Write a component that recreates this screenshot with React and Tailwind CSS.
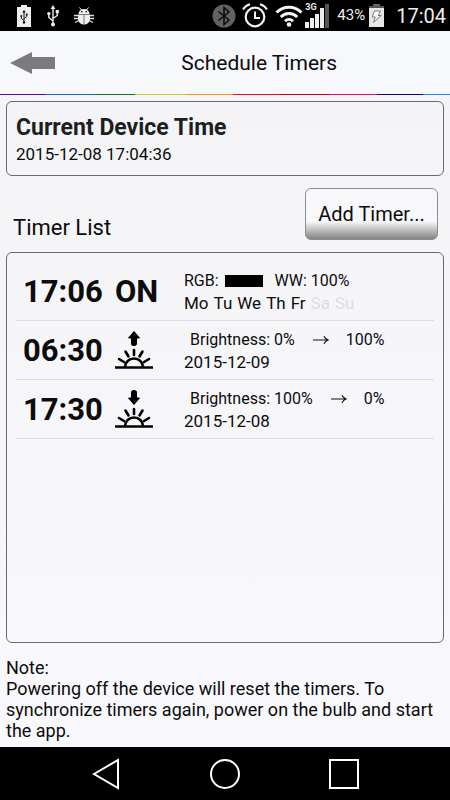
import React from 'react';

const timers = [
    { time: '17:06', kind: 'on', color: '#000000', ww: '100%', days: ['Mo', 'Tu', 'We', 'Th', 'Fr'] },
    { time: '06:30', kind: 'sunrise', from: '0%', to: '100%', date: '2015-12-09' },
    { time: '17:30', kind: 'sunset', from: '100%', to: '0%', date: '2015-12-08' }
];

const allDays = ['Mo', 'Tu', 'We', 'Th', 'Fr', 'Sa', 'Su'];

function UsbGlyph({ className }) {
    return (<svg viewBox="0 0 12 22" className={className} fill="none" stroke="currentColor" strokeWidth="1.4">
      <path d="M6 3v15M6 16L1.8 12.5V9M6 13.5l4.2-3V7"/>
      <path d="M6 0l2.4 4H3.6z" fill="currentColor" stroke="none"/>
      <circle cx="6" cy="19.5" r="2" fill="currentColor" stroke="none"/>
      <circle cx="1.8" cy="8.6" r="1.7" fill="currentColor" stroke="none"/>
      <rect x="8.7" y="5" width="3.2" height="3.2" fill="currentColor" stroke="none"/>
    </svg>);
}

function BatteryUsbIcon() {
    return (<svg viewBox="0 0 14 22" className="h-[22px] w-3.5">
      <path d="M4 0h6v2h4v20H0V2h4z" fill="#eee"/>
      <path d="M7 6v11M7 15.5l-2.7-2V11M7 13.5l2.7-1.8V9.5" fill="none" stroke="#111" strokeWidth="1"/>
      <path d="M7 4.8l1.6 2.6H5.4z" fill="#111"/>
      <circle cx="7" cy="17.5" r="1.2" fill="#111"/>
      <circle cx="4.3" cy="11" r="1" fill="#111"/>
      <rect x="8.8" y="8.6" width="1.8" height="1.8" fill="#111"/>
    </svg>);
}

function BugIcon() {
    return (<svg viewBox="0 0 20 18" className="h-[18px] w-5">
      <path d="M5.5 0.5l2 2.5M14.5 0.5l-2 2.5" stroke="#eee" strokeWidth="1"/>
      <path d="M4.5 7a5.5 5 0 0 1 11 0z" fill="#eee"/>
      <path d="M4 7.6h12V12a6 5.5 0 0 1-12 0z" fill="#eee"/>
      <path d="M0 8.5h4M0 11.5h4M1 15.5l4-2M20 8.5h-4M20 11.5h-4M19 15.5l-4-2" stroke="#ddd" strokeWidth="1.3"/>
      <circle cx="7.8" cy="4.8" r=".8" fill="#000"/>
      <circle cx="12.2" cy="4.8" r=".8" fill="#000"/>
      <path d="M10 8v9.5" stroke="#777" strokeWidth="1"/>
    </svg>);
}

function BluetoothIcon() {
    return (<svg viewBox="0 0 24 24" className="size-6">
      <circle cx="12" cy="12" r="11.5" fill="#626262"/>
      <path d="M6.5 7.500L17 16l-5 4.500v-17L17 8 6.500 16.500" fill="none" stroke="#0a0a0a" strokeWidth="1.5"/>
    </svg>);
}

function AlarmIcon() {
    return (<svg viewBox="0 0 26 25" className="h-[25px] w-[26px]" fill="none" stroke="#f2f2f2">
      <circle cx="13" cy="14" r="9.3" strokeWidth="2.2"/>
      <path d="M13 8.5V15h5" strokeWidth="2"/>
      <path d="M1 6.5Q3.5 2.5 8 1.3M25 6.5Q22.500 2.500 18 1.300" strokeWidth="2"/>
    </svg>);
}

function WifiIcon() {
    return (<svg viewBox="0 0 28 22" className="h-[22px] w-7" fill="none" stroke="#f4f4f4" strokeWidth="3">
      <path d="M1.5 7.5a17.5 17.500 0 0 1 25 0M5.800 12a11.500 11.500 0 0 1 16.400 0M10 16.200a5.700 5.700 0 0 1 8 0"/>
      <circle cx="14" cy="19.5" r="2.3" fill="#f4f4f4" stroke="none"/>
    </svg>);
}

function SignalIcon() {
    return (<div className="relative">
      <svg viewBox="0 0 24 25" className="h-[25px] w-6" fill="#eee">
        <path d="M0 19h4v6H0zM5 15h4v10H5zM10 11h4v14h-4zM15 5h4v20h-4z"/>
        <path d="M20 1h4v24h-4z" fill="#555"/>
      </svg>
      <span className="absolute top-0 left-0 text-[9px] leading-[9px] font-bold text-[#eee]">3G</span>
    </div>);
}

function BatteryIcon() {
    return (<svg viewBox="0 0 15 23" className="h-[23px] w-[15px]">
      <path d="M4 0h7v2H4z" fill="#666"/>
      <path d="M0 2h15v2H0z" fill="#555"/>
      <path d="M0 4h15v19H0z" fill="#e6e6e6"/>
      <path d="M5.5 7h6l-2.2 4.5h3L4.5 18.5l1.8-5.5H3.2z" fill="#fff" stroke="#777" strokeWidth="1"/>
    </svg>);
}

function StatusBar() {
    return (<div className="flex h-[31px] items-center justify-between bg-black pr-1 pl-[17px] text-white">
      <div className="flex items-center">
        <BatteryUsbIcon />
        <UsbGlyph className="ml-4 h-[22px] w-3 text-[#eee]"/>
        <div className="ml-[15px]"><BugIcon /></div>
      </div>
      <div className="flex items-center">
        <BluetoothIcon />
        <div className="ml-1.5"><AlarmIcon /></div>
        <div className="ml-[7px]"><WifiIcon /></div>
        <div className="ml-0.5"><SignalIcon /></div>
        <span className="ml-2 text-[15px] text-[#eee]">43%</span>
        <div className="mr-3 ml-1"><BatteryIcon /></div>
        <span className="text-xl text-[#eee]">17:04</span>
      </div>
    </div>);
}

function RainbowLine() {
    return (<div className="flex h-px">
      <div className="grow-46 bg-[#5b0a91]"/>
      <div className="grow-49 bg-[#0f73b5]"/>
      <div className="grow-40 bg-[#0b7a1c]"/>
      <div className="grow-51 bg-[#c9cf10]"/>
      <div className="grow-47 bg-[#f39a0b]"/>
      <div className="grow-46 bg-[#f01010]"/>
      <div className="grow-51 bg-[#b50d12]"/>
      <div className="grow-47 bg-[#e2106e]"/>
      <div className="grow-46 bg-[#120a6e]"/>
      <div className="grow-27 bg-[#1493dc]"/>
    </div>);
}

function Header() {
    return (<header>
      <div className="flex h-[63px] items-center justify-between pt-px pr-[113px] pl-2.5">
        <button type="button" aria-label="Back">
          <svg viewBox="0 0 45 22" className="h-[22px] w-[45px]">
            <path d="M0 11L22 0v5h23v12H22v5z" fill="#7b7b7b"/>
          </svg>
        </button>
        <h1 className="text-[21px] leading-8">Schedule Timers</h1>
      </div>
      <RainbowLine />
    </header>);
}

function SunIcon({ rising }) {
    return (<svg viewBox="0 0 38 38" className="mb-0.5 h-[38px] w-[38px]" fill="none" stroke="#000" strokeWidth="2.5">
      {rising
        ? <path d="M19 .5l5.500 6.500h-3v6a2.500 1.500 0 0 1-5 0V7h-3z" fill="#000" stroke="#000" strokeWidth="1" strokeLinejoin="round"/>
        : <path d="M19 14.500l5.500-6.500h-3V2a2.500 1.500 0 0 0-5 0v6h-3z" fill="#000" stroke="#000" strokeWidth="1" strokeLinejoin="round"/>}
      <path d="M10 36a9 8.500 0 0 1 18 0"/>
      <path d="M0 36.500h38" strokeWidth="2.600"/>
      <path d="M19 19v5M10.500 20.500l3 5M27.500 20.500l-3 5M4 28l5 3M34 28l-5 3" strokeWidth="2.600" strokeLinecap="round"/>
    </svg>);
}

function Arrow() {
    return (<svg viewBox="0 0 16 10" className="h-2.5 w-4" fill="none" stroke="#111" strokeWidth="1.2">
      <path d="M0 5h15M11 1.2Q12.5 4 15 5 12.5 6 11 8.8"/>
    </svg>);
}

function TimerRow({ timer }) {
    return (<li className="flex h-[59px] items-center border-b border-[#dedee2] pt-0.5 pl-[7px]">
      <span className="w-[92px] pt-px text-[31px] font-bold">{timer.time}</span>
      <div className="w-[69px]">
        {timer.kind === 'on'
          ? <span className="text-[31px] font-bold">ON</span>
          : <SunIcon rising={timer.kind === 'sunrise'}/>}
      </div>
      {timer.kind === 'on' ? (<div>
          <div className="flex items-center text-base leading-[22px]">
            <span>RGB:</span>
            <span className="mr-3 ml-1.5 h-3 w-[38px]" style={{ backgroundColor: timer.color }}/>
            <span>WW: {timer.ww}</span>
          </div>
          <div className="flex gap-[5px] text-[17px] leading-[22px]">
            {allDays.map(day => (<span key={day} className={timer.days.includes(day) ? '' : 'text-[#dcdde4]'}>{day}</span>))}
          </div>
        </div>) : (<div>
          <div className="flex items-center pl-1.5 text-base leading-[22px]">
            <span className="mr-[18px]">Brightness: {timer.from}</span>
            <Arrow />
            <span className="ml-[17px]">{timer.to}</span>
          </div>
          <div className="text-[17px] leading-[22px]">{timer.date}</div>
        </div>)}
    </li>);
}

function NavBar() {
    return (<nav className="flex h-[53px] items-center justify-center gap-[88px] bg-black">
      <button type="button" aria-label="Back">
        <svg viewBox="0 0 30 32" className="h-8 w-[30px]" fill="none" stroke="#fff" strokeWidth="2">
          <path d="M3 16L27 2v28z"/>
        </svg>
      </button>
      <button type="button" aria-label="Home">
        <svg viewBox="0 0 32 32" className="size-8" fill="none" stroke="#fff" strokeWidth="2">
          <circle cx="16" cy="16" r="14"/>
        </svg>
      </button>
      <button type="button" aria-label="Recent apps">
        <svg viewBox="0 0 30 32" className="h-8 w-[30px]" fill="none" stroke="#fff" strokeWidth="2">
          <path d="M1 2h28v28H1z"/>
        </svg>
      </button>
    </nav>);
}

export default function App() {
    return (<div className="flex min-h-screen flex-col bg-[#f7f8fc] font-['Roboto',sans-serif] text-[#0c0c0c]">
      <StatusBar />
      <Header />
      <main className="flex grow flex-col bg-linear-to-b from-[#f4f4f7] to-[#f9f9fd] px-1.5 pt-1.5 pb-1.5">
        <section className="h-[75px] rounded-md border border-[#6a6a6c] px-[9px] pt-3">
          <h2 className="text-[23px] leading-7 font-bold text-[#1c1f1e]">Current Device Time</h2>
          <p className="text-[17px] leading-6">2015-12-08 17:04:36</p>
        </section>
        <div className="flex items-end justify-between pt-3 pr-1.5 pb-3 pl-[7px]">
          <h2 className="text-[22px] leading-6">Timer List</h2>
          <button type="button" className="h-[52px] w-[133px] rounded-md border border-[#8c8c8e] bg-linear-to-b from-[#f8f8fa] from-65% to-[#858585] text-xl">
            Add Timer...
          </button>
        </div>
        <ul className="grow rounded-md border border-[#6a6a6c] px-[9px] pt-[9px]">
          {timers.map(timer => (<TimerRow key={timer.time} timer={timer}/>))}
        </ul>
        <p className="pt-3.5 text-[18px] leading-[21px]">
          Note:<br />
          Powering off the device will reset the timers. To synchronize timers again, power on the bulb and start the app.
        </p>
      </main>
      <NavBar />
    </div>);
}
